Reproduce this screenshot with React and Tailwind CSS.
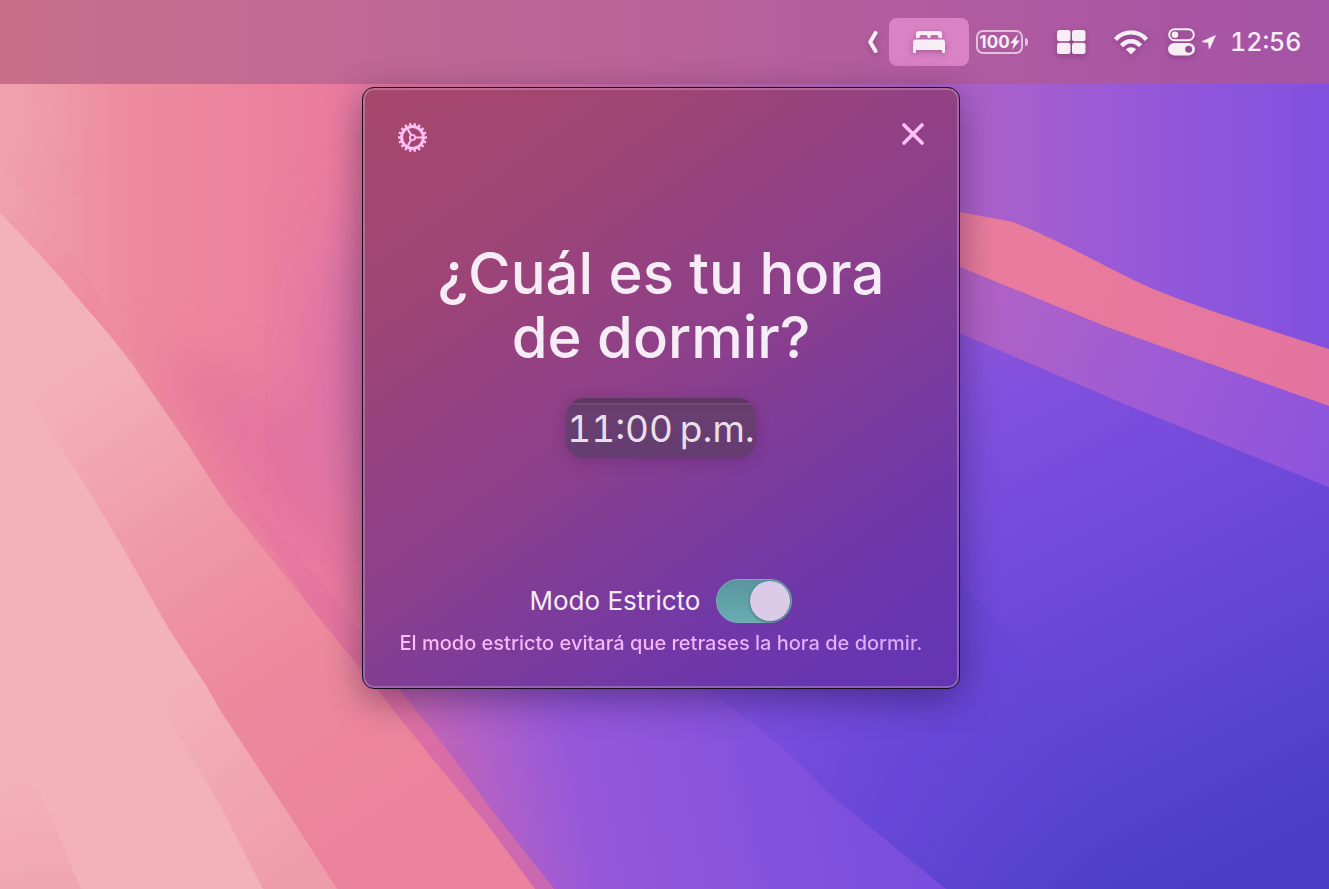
import React, { useState } from "react";

function Wallpaper() {
  return (
    <svg
      aria-hidden="true"
      className="absolute inset-0 h-full w-full"
      viewBox="0 0 1329 889"
      preserveAspectRatio="xMidYMid slice"
    >
      <defs>
        <filter id="soft" x="-50%" y="-50%" width="200%" height="200%">
          <feGaussianBlur stdDeviation="45" />
        </filter>
        <filter id="softer" x="-50%" y="-50%" width="200%" height="200%">
          <feGaussianBlur stdDeviation="25" />
        </filter>
        <linearGradient id="sky" gradientUnits="userSpaceOnUse" x1="0" y1="100" x2="1329" y2="100">
          <stop offset="0" stopColor="#f0a0ac" />
          <stop offset="0.1" stopColor="#ed8b9d" />
          <stop offset="0.25" stopColor="#ea7c9f" />
          <stop offset="0.45" stopColor="#d56fab" />
          <stop offset="0.75" stopColor="#a960cc" />
          <stop offset="0.88" stopColor="#9257da" />
          <stop offset="1" stopColor="#8150df" />
        </linearGradient>
        <linearGradient id="deep" gradientUnits="userSpaceOnUse" x1="900" y1="300" x2="1200" y2="900">
          <stop offset="0" stopColor="#955ad7" />
          <stop offset="0.2" stopColor="#8250de" />
          <stop offset="0.48" stopColor="#6f49da" />
          <stop offset="0.74" stopColor="#5b44d0" />
          <stop offset="1" stopColor="#4a3cc5" />
        </linearGradient>
        <linearGradient id="lower" gradientUnits="userSpaceOnUse" x1="440" y1="800" x2="950" y2="700">
          <stop offset="0" stopColor="#c165b5" />
          <stop offset="0.12" stopColor="#ad5fca" />
          <stop offset="0.27" stopColor="#9558da" />
          <stop offset="0.6" stopColor="#8552dd" />
          <stop offset="1" stopColor="#754cdd" />
        </linearGradient>
        <linearGradient id="middle" gradientUnits="userSpaceOnUse" x1="700" y1="700" x2="1130" y2="780">
          <stop offset="0" stopColor="#8250de" />
          <stop offset="0.45" stopColor="#6b48d9" stopOpacity="0.7" />
          <stop offset="1" stopColor="#5843cf" stopOpacity="0" />
        </linearGradient>
        <linearGradient id="band" gradientUnits="userSpaceOnUse" x1="960" y1="240" x2="1329" y2="380">
          <stop offset="0" stopColor="#ea7d9d" />
          <stop offset="1" stopColor="#e3749f" />
        </linearGradient>
        <linearGradient id="underband" gradientUnits="userSpaceOnUse" x1="950" y1="290" x2="1329" y2="450">
          <stop offset="0" stopColor="#b463c2" />
          <stop offset="0.5" stopColor="#a05cd4" />
          <stop offset="1" stopColor="#8c54dd" />
        </linearGradient>
        <linearGradient id="strip" gradientUnits="userSpaceOnUse" x1="200" y1="450" x2="540" y2="889">
          <stop offset="0" stopColor="#ea7c9e" />
          <stop offset="0.5" stopColor="#e2729f" />
          <stop offset="1" stopColor="#c968b1" />
        </linearGradient>
        <linearGradient id="slope" gradientUnits="userSpaceOnUse" x1="80" y1="360" x2="400" y2="830">
          <stop offset="0" stopColor="#f3b1b8" />
          <stop offset="0.12" stopColor="#f2aab3" />
          <stop offset="0.38" stopColor="#ef97a6" />
          <stop offset="0.62" stopColor="#ed8a9d" />
          <stop offset="1" stopColor="#eb829e" />
        </linearGradient>
        <linearGradient id="pale" gradientUnits="userSpaceOnUse" x1="170" y1="690" x2="300" y2="870">
          <stop offset="0" stopColor="#f3b1b8" />
          <stop offset="1" stopColor="#ef9caa" />
        </linearGradient>
        <linearGradient id="corner" gradientUnits="userSpaceOnUse" x1="20" y1="780" x2="40" y2="889">
          <stop offset="0" stopColor="#f3b1b8" />
          <stop offset="1" stopColor="#f0a6b1" />
        </linearGradient>
        <linearGradient id="ridge" gradientUnits="userSpaceOnUse" x1="0" y1="200" x2="110" y2="270">
          <stop offset="0" stopColor="#f0a1ad" />
          <stop offset="1" stopColor="#ee8c9d" />
        </linearGradient>
      </defs>
      <rect width="1329" height="889" fill="url(#sky)" />
      <ellipse cx="20" cy="110" rx="40" ry="50" fill="#f1a3ae" filter="url(#softer)" opacity="0.5" />
      <path d="M150 340 L300 400 L400 620 L240 500 Z" fill="#e2729f" filter="url(#softer)" opacity="0.7" />
      <ellipse cx="385" cy="370" rx="60" ry="150" fill="#c968ae" filter="url(#soft)" opacity="0.75" />
      <path d="M0 171 L40 205 Q87 270 140 373 L87 309 L0 213 Z" fill="url(#ridge)" />
      <path d="M640 150 L960 333 L1127 405 L1260 459 L1329 487 V889 H554 Q470 770 404 695 L370 640 Z" fill="url(#deep)" />
      <path d="M554 560 H940 L1250 889 H554 Z" fill="url(#middle)" />
      <path d="M380 640 L640 640 L707 690 Q780 740 828 793 L946 889 H554 L489 807 L404 695 Z" fill="url(#lower)" />
      <path d="M960 267 Q1030 297 1107 327 L1329 406 V487 L1260 459 L1127 405 L960 333 Z" fill="url(#underband)" />
      <path d="M900 200 L960 212 L1013 222 C1060 240 1100 265 1153 289 C1210 312 1270 330 1329 349 V406 L1107 327 L960 267 L900 240 Z" fill="url(#band)" />
      <path d="M200 430 L362 634 L404 695 Q450 752 489 807 L554 889 H520 L380 720 Z" fill="url(#strip)" />
      <path d="M0 213 Q45 258 87 309 Q108 332 130 361 L187 443 Q207 475 227 504 L362 671 L431 757 L486 823 L535 889 H0 Z" fill="url(#slope)" />
      <path d="M0 350 L67 457 Q108 520 143 583 L167 626 L207 687 L220 710 L290 816 L337 889 H0 Z" fill="url(#pale)" />
      <path d="M0 213 L30 400 L67 457 L167 716 L220 805 L263 889 H0 Z" fill="#f3b1b8" />
      <path d="M0 700 L37 784 L81 889 H0 Z" fill="url(#corner)" />
    </svg>
  );
}

function BedIcon() {
  return (
    <svg viewBox="0 0 34 24" className="h-6 w-[34px]" fill="currentColor" aria-hidden="true">
      <path d="M4 8 V4 Q4 1 7 1 H27 Q30 1 30 4 V8 H26.500 V7 Q26.500 5 24.500 5 H20 Q18.300 5 18.300 7 V8 H15.700 V7 Q15.700 5 14 5 H9.500 Q7.500 5 7.500 7 V8 Z" />
      <path d="M4 9.500 H30 Q33 9.500 33 12.500 V22 Q33 23 32 23 H31 Q30 23 30 22 V20 H4 V22 Q4 23 3 23 H2 Q1 23 1 22 V12.500 Q1 9.500 4 9.500 Z" />
    </svg>
  );
}

function GridIcon() {
  return (
    <svg viewBox="0 0 30 24" className="h-6 w-[30px]" fill="currentColor" aria-hidden="true">
      <rect x="0" y="0" width="13.500" height="11.200" rx="2.500" />
      <rect x="15" y="0" width="13.500" height="11.200" rx="2.500" />
      <rect x="0" y="12.800" width="13.500" height="11.200" rx="2.500" />
      <rect x="15" y="12.800" width="13.500" height="11.200" rx="2.500" />
    </svg>
  );
}

function WifiIcon() {
  return (
    <svg viewBox="0 0 34 26" className="h-[26px] w-[34px]" fill="none" stroke="currentColor" strokeWidth="4.400" aria-hidden="true">
      <path d="M1.500 10.500 C10 1 24 1 32.500 10.500" />
      <path d="M7.500 16.800 C13 10.800 21 10.800 26.500 16.800" />
      <path d="M17 25.500 L11.900 20.600 C14.600 17.600 19.400 17.600 22.100 20.600 Z" fill="currentColor" stroke="none" />
    </svg>
  );
}

function ControlsIcon() {
  return (
    <svg viewBox="0 0 27 28" className="h-7 w-[27px]" aria-hidden="true">
      <rect x="1.200" y="1.200" width="24.600" height="11" rx="5.500" fill="none" stroke="currentColor" strokeWidth="2" />
      <circle cx="7" cy="6.700" r="3.300" fill="currentColor" />
      <path
        fillRule="evenodd"
        fill="currentColor"
        d="M6.300 15 H20.700 A6.200 6.200 0 0 1 20.700 27.400 H6.300 A6.200 6.200 0 0 1 6.300 15 Z M20.700 17.700 A3.500 3.500 0 1 0 20.700 24.700 A3.500 3.500 0 1 0 20.700 17.700 Z"
      />
    </svg>
  );
}

function GearIcon() {
  return (
    <svg viewBox="0 0 30 30" className="size-[30px]" fill="none" stroke="currentColor" aria-hidden="true">
      <circle cx="14.500" cy="14.500" r="10.900" strokeWidth="3" />
      <circle cx="14.500" cy="14.500" r="13.200" strokeWidth="2.600" pathLength="180" strokeDasharray="5 5" strokeDashoffset="2.500" />
      <circle cx="14.500" cy="14.500" r="2.600" strokeWidth="1.900" />
      <path d="M17.500 14.500 H24.500 M13 11.900 L9.300 5.500 M13 17.100 L9.300 23.500" strokeWidth="2.100" />
    </svg>
  );
}

const shade = "drop-shadow-[0_2px_3px_rgba(60,0,60,0.3)]";

function MenuBar() {
  return (
    <header className="flex h-[84px] items-center justify-end bg-linear-to-r from-[#c96f8b] via-[#b9629a] to-[#a453a6] pr-7 text-[#f6edf5]">
      <button type="button" aria-label="Mostrar más" className={`mr-[10px] ${shade}`}>
        <svg viewBox="0 0 12 24" className="h-6 w-3" fill="none" stroke="currentColor" strokeWidth="4" strokeLinecap="round" strokeLinejoin="round" aria-hidden="true">
          <path d="M8.500 3 L3.200 12 L8.500 21" />
        </svg>
      </button>
      <button type="button" aria-label="Hora de dormir" className="flex h-12 w-20 items-center justify-center rounded-lg bg-[#d982c4]">
        <span className={shade}>
          <BedIcon />
        </span>
      </button>
      <div className="ml-[7px] flex items-center gap-[2px]">
        <div className="flex h-6 w-[47px] items-center justify-center rounded-[7px] border-2 border-[#f6edf5]/70">
          <span className="text-[17px] leading-5 font-bold">100</span>
          <svg viewBox="0 0 10 16" className="h-4 w-[10px]" fill="currentColor" aria-hidden="true">
            <path d="M7.800 0.300 L0.200 9.200 H4 L2.200 15.700 L9.800 6.600 H6 Z" />
          </svg>
        </div>
        <span className="h-2 w-[3px] rounded-r-full bg-[#f6edf5]/70" />
      </div>
      <button type="button" aria-label="Ventanas" className={`ml-[29px] ${shade}`}>
        <GridIcon />
      </button>
      <button type="button" aria-label="Wi-Fi" className={`ml-[27px] ${shade}`}>
        <WifiIcon />
      </button>
      <button type="button" aria-label="Centro de control" className={`ml-5 ${shade}`}>
        <ControlsIcon />
      </button>
      <svg viewBox="0 0 14 14" className="ml-[7px] size-[14px]" fill="currentColor" aria-hidden="true">
        <path d="M13.500 0.500 L0.500 6.300 Q0 6.900 0.800 7 L6.500 7.400 L7 13.200 Q7.200 14 7.700 13.400 Z" stroke="currentColor" strokeWidth="0.600" />
      </svg>
      <time className="ml-[14px] w-[71px] text-right text-[25px] leading-8 font-medium tabular-nums">12:56</time>
    </header>
  );
}

export default function App() {
  const [time, setTime] = useState("11:00\u202fp.m.");
  const [strict, setStrict] = useState(true);
  return (
    <div className="relative isolate min-h-screen overflow-hidden bg-[#8050de] font-['Inter','Liberation_Sans',sans-serif]">
      <div className="absolute inset-0 -z-10">
        <Wallpaper />
      </div>
      <MenuBar />
      <main className="flex justify-center pt-[3px] pr-[7px]">
        <section className="w-full max-w-[598px] rounded-xl border border-[#1b0b20] bg-[linear-gradient(144deg,#a8476b_0%,#a04574_21%,#8c3f8b_50%,#7239a6_75%,#6836b0_89%,#6534b3_100%)] px-[33px] pt-[35px] pb-[31px] text-[#f5ecf5] shadow-[inset_0_0_0_2px_rgba(255,255,255,0.22),0_10px_36px_rgba(30,10,50,0.45)]">
          <div className="flex items-start justify-between px-[2px] text-[#ffc0f6]">
            <button type="button" aria-label="Ajustes">
              <GearIcon />
            </button>
            <button type="button" aria-label="Cerrar">
              <svg viewBox="0 0 22 22" className="size-[22px]" fill="none" stroke="currentColor" strokeWidth="3.600" strokeLinecap="round" aria-hidden="true">
                <path d="M2 2 L20 20 M20 2 L2 20" />
              </svg>
            </button>
          </div>
          <h1 className="mt-[88px] text-center text-[58px] leading-16 font-medium">
            ¿Cuál es tu hora
            <br />
            de dormir?
          </h1>
          <div className="mt-[29px] flex justify-center">
            <input
              type="text"
              aria-label="Hora de dormir"
              value={time}
              onChange={(e) => setTime(e.target.value)}
              className="h-[60px] w-[190px] rounded-[18px] bg-[linear-gradient(180deg,#5e3664_0px,#5e3664_5px,#7a4b80_5px,#7a4b80_6px,#643e6a_7px,#693f70_14px,#643c70_100%)] text-center text-[37px] text-[#e9dfe9] tabular-nums shadow-[0_3px_14px_rgba(60,20,80,0.25)] outline-none"
            />
          </div>
          <div className="mt-[121px] flex items-center justify-center gap-4">
            <label htmlFor="strict" className="text-[26px] leading-8">
              Modo Estricto
            </label>
            <input
              id="strict"
              type="checkbox"
              role="switch"
              aria-describedby="strict-note"
              checked={strict}
              onChange={(e) => setStrict(e.target.checked)}
              className="flex h-11 w-[76px] appearance-none items-center rounded-full border border-[#76b0b4] bg-[#7d5c94] px-px before:size-10 before:rounded-full before:bg-[#dccbe8] before:shadow-[0_1px_3px_rgba(20,40,60,0.5)] checked:justify-end checked:bg-linear-to-b checked:from-[#5a959d] checked:to-[#68adb3]"
            />
          </div>
          <p
            id="strict-note"
            className="mt-[6px] bg-linear-to-r from-[#ffbcf6] via-[#f8b5fa] to-[#d9aafa] bg-clip-text text-center text-xl leading-7 font-medium whitespace-nowrap text-transparent"
          >
            El modo estricto evitará que retrases la hora de dormir.
          </p>
        </section>
      </main>
    </div>
  );
}
